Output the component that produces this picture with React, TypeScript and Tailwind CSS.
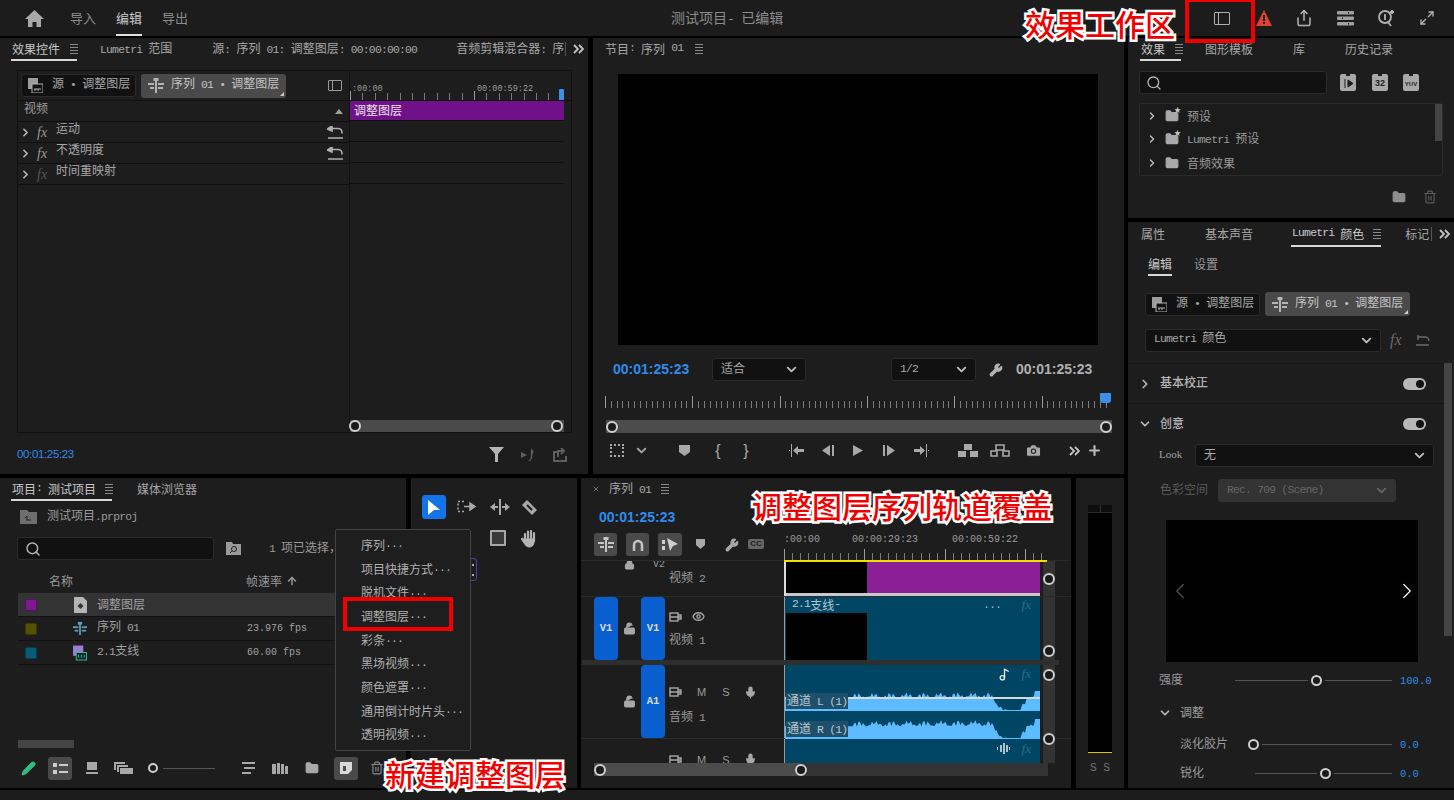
import type { ReactNode } from 'react';
import { ChevronDown, ChevronRight, ChevronLeft, Search, Wrench, ArrowUp, Plus, Trash2, Folder, Pencil, Camera, Mic, Eye, Lock, LockOpen, Music2, Maximize2, Share, X } from 'lucide-react';

// latin runs are squeezed to half the CJK width, as in the app's own font
function Z({ children }: { children: string }) {
  return (
    <>
      {children.split(/([\x00-\x7f•]+)/).filter(Boolean).map((part, i) =>
        /^[\x00-\x7f•]+$/.test(part) ? (
          <span key={i} className="font-['Liberation_Mono',monospace] text-[0.95em] tracking-[-0.07em] whitespace-pre">{part}</span>
        ) : (
          <span key={i}>{part}</span>
        )
      )}
    </>
  );
}

function Burger() {
  return (
    <span className="flex w-[8px] flex-col gap-[2px]">
      <span className="h-px bg-[#8a8a8a]" />
      <span className="h-px bg-[#8a8a8a]" />
      <span className="h-px bg-[#8a8a8a]" />
      <span className="h-px bg-[#8a8a8a]" />
    </span>
  );
}

function More() {
  return (
    <svg width="11" height="10" viewBox="0 0 11 10" fill="none" stroke="#c4c4c4" strokeWidth="1.8">
      <path d="M1 1l4 4-4 4M6 1l4 4-4 4" />
    </svg>
  );
}

function Knob({ size = 'w-[12px] h-[12px]' }: { size?: string }) {
  return <span className={`${size} block shrink-0 rounded-full border-2 border-[#cfcfcf] bg-[#1a1a1a]`} />;
}

function SeqIcon({ c = '#b4b4b4' }: { c?: string }) {
  return (
    <svg width="16" height="15" viewBox="0 0 16 15" fill={c}>
      <rect x="7" y="0" width="2" height="15" />
      <rect x="5.5" y="0" width="5" height="3" />
      <rect x="0" y="5" width="6" height="2" />
      <rect x="10" y="5" width="6" height="2" />
      <rect x="2" y="9" width="4" height="2" />
      <rect x="10" y="9" width="5" height="2" />
    </svg>
  );
}

function SourceIcon() {
  return (
    <svg width="15" height="15" viewBox="0 0 15 15">
      <rect x="0" y="0" width="10" height="11" fill="#9c9c9c" />
      <rect x="4" y="6" width="11" height="9" fill="#111" stroke="#b4b4b4" />
      <path d="M6 11h7M7 13v-2M10 13v-2" stroke="#b4b4b4" />
    </svg>
  );
}

function Tools({ d, w = 16, h = 14 }: { d: string; w?: number; h?: number }) {
  return (
    <svg width={w} height={h} viewBox={`0 0 ${w} ${h}`} fill="#a8a8a8">
      <path d={d} />
    </svg>
  );
}

function Slot({ children, className = '' }: { children: ReactNode; className?: string }) {
  return <span className={`flex w-[14px] shrink-0 items-center justify-center [&>svg]:shrink-0 ${className}`}>{children}</span>;
}

function SourceTabs() {
  return (
    <div className="flex items-center gap-[5px]">
      <div className="flex h-[23px] w-[115px] items-center rounded-[3px] border border-[#2a2a2a] bg-[#111] pl-[6px] text-[12px] text-[#a6a6a6]">
        <SourceIcon />
        <span className="ml-[9px] -mt-[2px]"><Z>源 • 调整图层</Z></span>
      </div>
      <div className="relative flex h-[24px] w-[145px] items-center rounded-[3px] bg-[#4a4a4a] pl-[7px] text-[12px] text-[#c4c4c4]">
        <SeqIcon />
        <span className="ml-[7px] -mt-[2px]"><Z>序列 01 • 调整图层</Z></span>
        <span className="absolute bottom-[2px] right-[2px] h-0 w-0 border-b-[4px] border-l-[4px] border-b-[#ccc] border-l-transparent" />
      </div>
    </div>
  );
}

function Dropdown({ w, label, dim }: { w: string; label: string; dim?: boolean }) {
  return (
    <div className={`${w} flex h-[23px] items-center justify-between rounded-[3px] border pl-[8px] pr-[6px] text-[12px] ${dim ? 'border-[#333] bg-[#333] text-[#666]' : 'border-[#2a2a2a] bg-[#111] text-[#a8a8a8]'}`}>
      <span className="-mt-[3px]"><Z>{label}</Z></span>
      <ChevronDown size={15} strokeWidth={3} color={dim ? '#666' : '#bdbdbd'} />
    </div>
  );
}

function Ruler({ w, step, major, h = 12 }: { w: number; step: number; major: number; h?: number }) {
  const n = Math.floor(w / step);
  return (
    <svg width={w} height={h} className="block">
      {Array.from({ length: n + 1 }, (_, i) => {
        const big = i % major === 0;
        return <rect key={i} x={Math.round(i * step)} y={big ? 0 : h - 7} width="1" height={big ? h : 7} fill={big ? '#9a9a9a' : '#7c7c7c'} />;
      })}
    </svg>
  );
}

function EffectRow({ name, dim, reset }: { name: string; dim?: boolean; reset?: boolean }) {
  return (
    <div className="flex h-[21px] items-center border-b border-[#0f0f0f] pl-[1px] text-[12px] text-[#a6a6a6]">
      <ChevronRight size={13} strokeWidth={3} color="#b8b8b8" />
      <span className={`ml-[5px] w-[16px] font-['Liberation_Serif',serif] text-[14px] italic ${dim ? 'text-[#565656]' : 'text-[#9a9a9a]'}`}>fx</span>
      <span className="-mt-[8px] ml-[3px]"><Z>{name}</Z></span>
      {reset && (
        <svg className="ml-auto mr-[5px]" width="17" height="13" viewBox="0 0 17 13" fill="none" stroke="#b0b0b0" strokeWidth="1.6">
          <path d="M4 2.500h7a4 4 0 0 1 4 4v1M4 0v5M1 12h15" />
          <path d="M0.500 3L5 0v5z" fill="#b0b0b0" />
        </svg>
      )}
    </div>
  );
}

function EffectControls() {
  return (
    <section className="flex h-full w-[588px] shrink-0 flex-col bg-[#1d1d1d]">
      <div className="flex h-[24px] shrink-0 items-center pb-[2px] pl-[12px] text-[12px] text-[#a6a6a6]">
        <span className="relative flex h-full items-center text-[#c8c8c8]">
          效果控件
          <span className="ml-[10px]"><Burger /></span>
          <span className="absolute -bottom-[1px] -left-[1px] h-[2px] w-[66px] bg-[#d8d8d8]" />
        </span>
        <span className="ml-[22px]"><Z>Lumetri 范围</Z></span>
        <span className="ml-[40px]"><Z>源: 序列 01: 调整图层: 00:00:00:00</Z></span>
        <span className="ml-[39px]"><Z>音频剪辑混合器: 序</Z></span>
        <span className="ml-px h-[14px] w-px bg-[#555]" />
        <span className="ml-[7px]"><More /></span>
      </div>
      <div className="ml-[17px] mt-[8px] flex h-[363px] w-[555px] border border-[#111]">
        <div className="flex w-[332px] shrink-0 flex-col border-r border-[#111]">
          <div className="flex h-[30px] items-center justify-between border-b border-[#111] pl-[3px] pr-[7px]">
            <SourceTabs />
            <span className="block h-[11px] w-[14px] rounded-[1px] border border-[#9a9a9a] pl-[3px]"><span className="block h-full w-px bg-[#9a9a9a]" /></span>
          </div>
          <div className="flex h-[21px] items-center justify-between border-b border-[#0f0f0f] pl-[6px] pr-[6px] text-[12px] text-[#9a9a9a]">
            <span className="-mt-[7px]">视频</span>
            <span className="h-0 w-0 border-x-[4px] border-b-[5px] border-x-transparent border-b-[#a0a0a0]" />
          </div>
          <EffectRow name="运动" reset />
          <EffectRow name="不透明度" reset />
          <EffectRow name="时间重映射" dim />
        </div>
        <div className="relative flex min-w-0 flex-1 flex-col">
          <div className="relative h-[30px] shrink-0 border-b border-[#111]">
            <span className="absolute left-[2px] top-[12px] font-['Liberation_Mono',monospace] text-[8.5px] text-[#9a9a9a]">:00:00</span>
            <span className="absolute left-[127px] top-[12px] font-['Liberation_Mono',monospace] text-[8.5px] text-[#9a9a9a]">00:00:59:22</span>
            <div className="absolute bottom-0 left-0"><Ruler w={213} step={12.4} major={10} h={9} /></div>
            <span className="absolute bottom-0 left-[209px] h-[11px] w-[5px] rounded-t-[1px] bg-[#3b8fe6]" />
          </div>
          <div className="flex h-[20px] w-[214px] items-center border-b border-[#0f0f0f] bg-[#711189] pl-[4px] text-[12px] text-[#e8e8e8]"><span className="-mt-[2px]">调整图层</span></div>
          <div className="h-[21px] w-[214px] border-b border-[#0f0f0f]" />
          <div className="h-[21px] w-[214px] border-b border-[#0f0f0f]" />
          <div className="h-[21px] w-[214px] border-b border-[#0f0f0f]" />
          <div className="mt-auto flex h-[12px] w-[214px] items-center justify-between bg-[#4a4a4a]">
            <span className="-ml-px"><Knob /></span>
            <span className="mr-px"><Knob /></span>
          </div>
        </div>
      </div>
      <div className="flex flex-1 items-center pl-[17px] pr-[21px] pt-[2px]">
        <span className="font-['Liberation_Sans',sans-serif] text-[11.5px] tracking-[-0.35px] text-[#2d8ceb]">00:01:25:23</span>
        <svg className="ml-auto" width="15" height="15" viewBox="0 0 15 15" fill="#b4b4b4"><path d="M0 0h15L9 7v8H6V7z" /></svg>
        <svg className="ml-[17px]" width="15" height="14" viewBox="0 0 15 14" fill="#5e5e5e"><path d="M0 4l6 3-6 3zM10 0c1 2 4 3 2 5-1 3 0 5-3 8-1 0-2 0-1-1 2 0 2-4 2-12z" /></svg>
        <svg className="ml-[17px]" width="14" height="14" viewBox="0 0 14 14" fill="none" stroke="#5e5e5e" strokeWidth="2"><path d="M5 4H1v9h12V8M5 9V3h5M8 0l3 3-3 3" /></svg>
      </div>
    </section>
  );
}

function Program() {
  return (
    <section className="flex h-full min-w-0 flex-1 flex-col bg-[#1d1d1d]">
      <div className="flex h-[24px] shrink-0 items-center pb-[2px] pl-[12px] text-[12px] text-[#a6a6a6]">
        <Z>节目: 序列 01</Z>
        <span className="ml-[12px]"><Burger /></span>
      </div>
      <div className="ml-[25px] mt-[12px] h-[271px] w-[480px] bg-black" />
      <div className="mt-[13px] flex h-[23px] items-center pl-[20px]">
        <span className="w-[99px] font-['Liberation_Sans',sans-serif] text-[14px] font-bold text-[#2d8ceb]">00:01:25:23</span>
        <Dropdown w="w-[94px]" label="适合" />
        <span className="w-[85px]" />
        <Dropdown w="w-[85px]" label="1/2" />
        <Wrench className="ml-[13px]" size={14} fill="#b4b4b4" color="#b4b4b4" />
        <span className="ml-[13px] font-['Liberation_Sans',sans-serif] text-[14px] font-bold text-[#b0b0b0]">00:01:25:23</span>
      </div>
      <div className="relative ml-[12px] mt-[13px] h-[14px]">
        <div className="pt-[2px]"><Ruler w={505} step={5.82} major={15} /></div>
        <span className="absolute -top-[1px] left-[495px] h-[10px] w-[11px] rounded-b-[3px] bg-[#3b8fe6]" />
      </div>
      <div className="ml-[13px] mt-[12px] flex h-[13px] w-[506px] items-center justify-between bg-[#4c4c4c]">
        <Knob />
        <Knob />
      </div>
      <div className="flex flex-1 items-center pb-[6px] pl-[17px] text-[#a8a8a8]">
        <Slot><span className="block h-[13px] w-[14px] shrink-0 border-2 border-dotted border-[#a8a8a8]" /></Slot>
        <Slot className="ml-[10px]"><ChevronDown size={15} strokeWidth={3} /></Slot>
        <Slot className="ml-[29px]"><Tools w={11} h={11} d="M0 0h11v7l-5.500 4L0 7z" /></Slot>
        <Slot className="ml-[20px] font-['Liberation_Sans',sans-serif] text-[16px]">{'{'}</Slot>
        <Slot className="ml-[14px] font-['Liberation_Sans',sans-serif] text-[16px]">{'}'}</Slot>
        <Slot className="ml-[36px]"><Tools w={15} h={13} d="M2 0h1v13H2zM0 6h1v1H0zM9 2v3h6v3H9v3L4 6.500z" /></Slot>
        <Slot className="ml-[18px]"><Tools w={12} h={11} d="M8 0v11L0 5.500zM10 0h2v11h-2z" /></Slot>
        <Slot className="ml-[16px]"><Tools w={10} h={11} d="M0 0l10 5.500L0 11z" /></Slot>
        <Slot className="ml-[17px]"><Tools w={12} h={11} d="M0 0h2v11H0zM4 0l8 5.500L4 11z" /></Slot>
        <Slot className="ml-[18px]"><Tools w={15} h={13} d="M12 0h1v13h-1zM14 6h1v1h-1zM6 2v3H0v3h6v3l5-4.500z" /></Slot>
        <Slot className="ml-[33px]"><Tools w={20} h={13} d="M6 0h8v6H6zM0 7h8v6H0zM12 7h8v6h-8z" /></Slot>
        <Slot className="ml-[18px]"><svg width="20" height="13" viewBox="0 0 20 13" fill="none" stroke="#a8a8a8" strokeWidth="1.600"><path d="M6 1h8v5H6zM1 7h6v5H1zM13 7h6v5h-6z" /></svg></Slot>
        <Slot className="ml-[19px]"><Camera size={17} fill="#a8a8a8" color="#1d1d1d" strokeWidth={1.5} /></Slot>
        <Slot className="ml-[27px]"><More /></Slot>
        <Slot className="ml-[6px]"><Plus size={15} strokeWidth={3.5} color="#b8b8b8" /></Slot>
      </div>
    </section>
  );
}

function Swatch({ c }: { c: string }) {
  return <span className={`h-[12px] w-[12px] rounded-[2px] border border-black/30 ${c}`} />;
}

function ProjectRow({ swatch, icon, name, fps, selected }: { swatch: string; icon: ReactNode; name: string; fps?: string; selected?: boolean }) {
  return (
    <div className={`flex h-[24px] items-center border-b border-[#111] pl-[7px] text-[12px] text-[#a0a0a0] ${selected ? 'bg-[#333]' : ''}`}>
      <Swatch c={swatch} />
      <span className="ml-[36px] flex w-[14px] justify-center">{icon}</span>
      <span className="-mt-[2px] ml-[10px] w-[150px]"><Z>{name}</Z></span>
      {fps && <span className="font-['Liberation_Mono',monospace] text-[10px]">{fps}</span>}
    </div>
  );
}

function Project() {
  return (
    <section className="flex h-full w-[406px] shrink-0 flex-col bg-[#1d1d1d]">
      <div className="flex h-[24px] items-center pb-[2px] pl-[12px] text-[12px] text-[#a6a6a6]">
        <span className="relative flex h-full items-center text-[#c8c8c8]">
          <Z>项目: 测试项目</Z>
          <span className="ml-[9px]"><Burger /></span>
          <span className="absolute -bottom-[1px] -left-[1px] h-[2px] w-[101px] bg-[#d8d8d8]" />
        </span>
        <span className="ml-[24px]">媒体浏览器</span>
      </div>
      <div className="mt-[3px] flex h-[24px] items-center pl-[20px] text-[12px] text-[#9a9a9a]">
        <svg width="17" height="14" viewBox="0 0 17 14" fill="#6e6e6e"><path d="M0 0h7l2 2h8v12H0z" /><path d="M6 10h5M7 10V6l-2 2" stroke="#222" fill="none" /></svg>
        <span className="ml-[10px] -mt-[2px]"><Z>测试项目.prproj</Z></span>
      </div>
      <div className="mt-[8px] flex items-center pl-[17px]">
        <div className="flex h-[23px] w-[197px] items-center rounded-[3px] border border-[#2a2a2a] bg-[#111] pl-[7px]">
          <Search size={16} color="#b4b4b4" strokeWidth={2.2} />
        </div>
        <svg className="ml-[12px]" width="15" height="13" viewBox="0 0 15 13" fill="#9a9a9a"><path d="M0 0h6l1 2h8v11H0z" /><circle cx="8" cy="7" r="2.500" fill="none" stroke="#222" /><path d="M6 9l-2 2" stroke="#222" /></svg>
        <span className="ml-[28px] text-[12px] text-[#9a9a9a]"><Z>1 项已选择，</Z></span>
      </div>
      <div className="mt-[9px] flex h-[24px] items-center text-[12px] text-[#9a9a9a]">
        <span className="ml-[49px] w-[197px]">名称</span>
        <span>帧速率</span>
        <ArrowUp className="ml-[4px]" size={12} strokeWidth={3} />
      </div>
      <div className="ml-[18px] flex flex-1 flex-col">
        <ProjectRow swatch="bg-[#7c1a8e]" selected name="调整图层" icon={<svg width="13" height="16" viewBox="0 0 13 16"><path d="M0 0h9l4 4v12H0z" fill="#b4b4b4" /><path d="M6.500 6l3 3-3 3-3-3z" fill="#333" /></svg>} />
        <ProjectRow swatch="bg-[#525200]" name="序列 01" fps="23.976 fps" icon={<SeqIcon c="#5f9fc0" />} />
        <ProjectRow swatch="bg-[#0b5a78]" name="2.1支线" fps="60.00 fps" icon={<svg width="15" height="16" viewBox="0 0 15 16"><rect width="11" height="11" fill="#9a7fd0" /><rect x="3.500" y="7.500" width="11" height="8" fill="#123" stroke="#2fc48a" /><path d="M6 10v3M9 10v3M12 10v3" stroke="#2fc48a" /></svg>} />
        <div className="mt-auto h-[8px] w-[56px] bg-[#444]" />
      </div>
      <div className="flex h-[40px] shrink-0 items-center pl-[21px] text-[#a0a0a0]">
        <Slot><Pencil size={15} fill="#2fbf7f" color="#2fbf7f" /></Slot>
        <span className="ml-[13px] flex h-[23px] w-[24px] flex-col items-center justify-center gap-[3px] rounded-[3px] bg-[#4a4a4a]">
          <span className="flex gap-[2px]"><span className="h-[4px] w-[4px] bg-[#ccc]" /><span className="mt-[1px] h-[2px] w-[9px] bg-[#ccc]" /></span>
          <span className="flex gap-[2px]"><span className="h-[4px] w-[4px] bg-[#ccc]" /><span className="mt-[1px] h-[2px] w-[9px] bg-[#ccc]" /></span>
        </span>
        <Slot className="ml-[13px]"><Tools w={12} h={12} d="M1 0h10v8H1zM0 10h12v2H0z" /></Slot>
        <Slot className="ml-[17px]"><Tools w={19} h={12} d="M0 0h11v2H2v6H0zM3 3h11v2H5v5H3zM6 6h13v6H6z" /></Slot>
        <span className="ml-[18px]"><Knob size="h-[10px] w-[10px]" /></span>
        <span className="ml-[5px] h-px w-[52px] bg-[#555]" />
        <Slot className="ml-[26px]"><Tools w={13} h={12} d="M0 0h13v2H0zM2 5h11v2H2zM0 10h9v2H0z" /></Slot>
        <Slot className="ml-[18px]"><Tools w={16} h={11} d="M0 1h4v10H0zM5 0h3v11H5zM9 1h3v10H9zM13 3h3v8h-3z" /></Slot>
        <Slot className="ml-[18px]"><Folder size={14} fill="#a8a8a8" color="#a8a8a8" /></Slot>
        <span className="ml-[15px] flex h-[23px] w-[24px] items-center justify-center rounded-[3px] bg-[#4a4a4a]">
          <svg width="12" height="12" viewBox="0 0 12 12"><path d="M0 0h12v8l-4 4H0z" fill="#d8d8d8" /><path d="M3 4h3v5H3z" fill="#4a4a4a" /></svg>
        </span>
        <Slot className="ml-[12px]"><Trash2 size={14} color="#8a8a8a" /></Slot>
      </div>
    </section>
  );
}

function ToolsPanel() {
  return (
    <section className="h-full w-[166px] shrink-0 bg-[#1d1d1d] pl-[11px] pt-[17px]">
      <div className="flex h-[24px] items-center">
        <span className="flex h-[24px] w-[24px] items-center justify-center rounded-[3px] bg-[#1473e6]">
          <svg width="12" height="15" viewBox="0 0 12 15" fill="#fff"><path d="M0 0l12 10H6l-6 5z" /></svg>
        </span>
        <span className="ml-[11px]">
          <svg width="20" height="14" viewBox="0 0 20 14" fill="none" stroke="#a8a8a8" strokeWidth="1.500"><path d="M7 1.500H1v10h7" strokeDasharray="2 2" /><path d="M7 6.500h8" /><path d="M13 3l5 3.500-5 3.500z" fill="#a8a8a8" /></svg>
        </span>
        <span className="ml-[13px]">
          <svg width="20" height="16" viewBox="0 0 20 16" fill="#a8a8a8"><path d="M9 0h2v16H9zM0 8l5-4v8zM20 8l-5-4v8z" /><path d="M5 7h3v2H5zM12 7h3v2h-3z" /></svg>
        </span>
        <span className="ml-[12px]">
          <svg width="15" height="15" viewBox="0 0 15 15" fill="#a8a8a8"><path d="M5 0l10 10-5 5L0 5z" /><path d="M5 5l5 5" stroke="#1d1d1d" strokeWidth="2" /></svg>
        </span>
      </div>
      <div className="mt-[7px] flex h-[24px] items-center pl-[68px]">
        <span className="block h-[16px] w-[16px] rounded-[1px] border-2 border-[#a8a8a8] bg-[#3a3a3a]" />
        <svg className="ml-[14px]" width="19" height="19" viewBox="0 0 19 19" fill="none" stroke="#b4b4b4" strokeLinecap="round">
          <path d="M5 5v7M8 2.500v9M11 2v9M14 4v8" strokeWidth="2.200" />
          <path d="M5 10h9v3c0 3-2 5-4.500 5S6 17 4 14l-2.500-3.500c-.5-1 .7-2 1.700-1L5 12" fill="#b4b4b4" strokeWidth="1" />
        </svg>
      </div>
      <div className="ml-[42px] mt-[8px] flex h-[23px] w-[13px] flex-col items-end justify-center gap-[8px] rounded-r-[3px] border border-[#4a3fb0] pr-[2px]">
        <span className="h-[2px] w-[2px] bg-[#aaa]" />
        <span className="h-[2px] w-[2px] bg-[#aaa]" />
      </div>
    </section>
  );
}

function Wave({ seed, w = 256, h = 20 }: { seed: number; w?: number; h?: number }) {
  let d = `M0 ${h} `;
  for (let x = 0; x <= w; x += 1.5) {
    const noise = Math.abs(Math.sin(x * 0.73 + seed) * Math.cos(x * 0.19 + seed * 2)) * 6 + Math.abs(Math.sin(x * 2.1)) * 1.5;
    const drop = x > 205 && x < 245 ? Math.min(x - 205, 16, (245 - x) * 1.4) : 0;
    const bump = x > 250 ? 6 : 0;
    d += `L${x} ${Math.min(h - 1, h * 0.42 - noise + drop * (h * 0.055) - bump)} `;
  }
  d += `L${w} ${h} Z`;
  return (
    <svg width={w} height={h} className="block">
      <path d={d} fill="#5cbcff" />
    </svg>
  );
}

function TrackBtn({ label, h }: { label: string; h: string }) {
  return <span className={`${h} flex w-[24px] items-center justify-center rounded-[4px] bg-[#0a5fd0] font-['Liberation_Mono',monospace] text-[10.5px] font-bold text-[#d8d8d8]`}>{label}</span>;
}

function ClipIcon() {
  return (
    <svg width="13" height="10" viewBox="0 0 13 10" fill="none" stroke="#a8a8a8" strokeWidth="1.400"><rect x="1" y="1" width="8" height="8" /><path d="M1 5h11M9 3h3v4H9" /></svg>
  );
}

function Fx({ className = '' }: { className?: string }) {
  return <span className={`font-['Liberation_Serif',serif] text-[13px] italic text-[#2f6b85] ${className}`}>fx</span>;
}

function AudioIcons() {
  return (
    <span className="flex items-center font-['Liberation_Sans',sans-serif] text-[11px]">
      <ClipIcon />
      <span className="ml-[15px]">M</span>
      <span className="ml-[16px]">S</span>
      <Mic className="ml-[14px]" size={13} fill="#a8a8a8" color="#a8a8a8" />
    </span>
  );
}

function Timeline() {
  return (
    <section className="flex h-full w-[490px] shrink-0 flex-col bg-[#1d1d1d]">
      <div className="flex h-[24px] shrink-0 items-center pb-[2px] pl-[11px] text-[12px] text-[#a6a6a6]">
        <X size={8} strokeWidth={2} color="#9a9a9a" />
        <span className="ml-[9px]"><Z>序列 01</Z></span>
        <span className="ml-[10px]"><Burger /></span>
      </div>
      <div className="flex h-[25px] shrink-0 items-center pl-[18px] pt-[6px] font-['Liberation_Sans',sans-serif] text-[14px] font-bold text-[#2d8ceb]">00:01:25:23</div>
      <div className="flex h-[33px] shrink-0 pt-[6px]">
        <div className="flex w-[203px] shrink-0 items-start pl-[13px]">
          <span className="flex h-[23px] w-[23px] items-center justify-center rounded-[3px] bg-[#4a4a4a]"><SeqIcon c="#c4c4c4" /></span>
          <span className="ml-[9px] flex h-[23px] w-[23px] items-center justify-center rounded-[3px] bg-[#4a4a4a]">
            <svg width="12" height="12" viewBox="0 0 12 12" fill="none" stroke="#c4c4c4" strokeWidth="2.500"><path d="M2 12V6a4 4 0 0 1 8 0v6" /></svg>
          </span>
          <span className="ml-[9px] flex h-[23px] w-[24px] items-center justify-center rounded-[3px] bg-[#4a4a4a]">
            <svg width="16" height="14" viewBox="0 0 16 14" fill="#d0d0d0"><path d="M5 0l11 6-5 2-3 5zM0 2h3v4H0zM0 8h3v4H0z" /></svg>
          </span>
          <span className="ml-[14px] mt-[6px]"><Tools w={9} h={10} d="M0 0h9v6l-4.500 4L0 6z" /></span>
          <Wrench className="ml-[20px] mt-[5px]" size={14} fill="#a8a8a8" color="#a8a8a8" />
          <span className="ml-[9px] mt-[6px] flex h-[10px] w-[16px] items-center justify-center rounded-[2px] bg-[#666] font-['Liberation_Sans',sans-serif] text-[8px] font-bold leading-none text-[#1d1d1d]">CC</span>
        </div>
        <div className="relative flex-1">
          <span className="absolute -top-[1px] left-0 font-['Liberation_Mono',monospace] text-[10px] text-[#9a9a9a]">:00:00</span>
          <span className="absolute -top-[1px] left-[68px] font-['Liberation_Mono',monospace] text-[10px] text-[#9a9a9a]">00:00:29:23</span>
          <span className="absolute -top-[1px] left-[168px] font-['Liberation_Mono',monospace] text-[10px] text-[#9a9a9a]">00:00:59:22</span>
        </div>
      </div>
      <div className="relative flex h-[37px] shrink-0 border-y border-[#2a2a2a]">
        <div className="flex w-[203px] shrink-0 overflow-hidden text-[12px] text-[#9a9a9a]">
          <Lock className="ml-[43px] -mt-[2px]" size={11} fill="#a8a8a8" color="#a8a8a8" />
          <span className="ml-[18px] -mt-[2px] font-['Liberation_Mono',monospace] text-[10px] leading-[11px]">V2</span>
          <span className="ml-[4px] mt-[7px]"><Z>视频 2</Z></span>
        </div>
        <div className="flex w-[256px] flex-col border-l-2 border-[#ddd]">
          <div className="flex flex-1">
            <span className="w-[81px] bg-black" />
            <span className="flex-1 bg-[#8a1f96]" />
          </div>
          <span className="h-[3px] bg-[#c8c8c8]" />
        </div>
        <div className="absolute -top-[12px] left-[203px]"><Ruler w={263} step={8.03} major={10} h={11} /></div>
        <span className="absolute -top-[1px] left-[203px] h-[2px] w-[263px] bg-[#f0e000]" />
        <div className="ml-[3px] flex w-[12px] justify-center bg-[#333] pt-[12px]"><Knob /></div>
      </div>
      <div className="flex h-[63px] shrink-0">
        <div className="flex w-[203px] shrink-0 pl-[13px] text-[12px] text-[#9a9a9a]">
          <TrackBtn label="V1" h="h-full" />
          <span className="flex w-[23px] items-center justify-center"><LockOpen size={13} fill="#a8a8a8" color="#a8a8a8" /></span>
          <TrackBtn label="V1" h="h-full" />
          <div className="ml-[4px] flex flex-col pt-[13px]">
            <span className="flex items-center gap-[10px]"><ClipIcon /><Eye size={13} color="#a8a8a8" strokeWidth={2.5} /></span>
            <span className="mt-[7px]"><Z>视频 1</Z></span>
          </div>
        </div>
        <div className="relative flex w-[256px] flex-col border-l border-[#999] bg-[#004664]">
          <div className="flex h-[16px] items-center pl-[7px] pr-[9px] text-[12px] text-[#b8c8d0]">
            <Z>2.1支线-</Z>
            <span className="ml-auto font-['Liberation_Mono',monospace] text-[10px] text-[#b8c8d0]">...</span>
            <Fx className="ml-[20px]" />
          </div>
          <span className="ml-px h-[47px] w-[81px] bg-black" />
        </div>
        <div className="ml-[3px] flex w-[12px] items-end justify-center bg-[#333] pb-[3px]"><Knob /></div>
      </div>
      <div className="ml-px h-[5px] w-[477px] shrink-0 bg-[#2e2e2e]" />
      <div className="flex h-[74px] shrink-0 border-b border-[#2a2a2a]">
        <div className="flex w-[203px] shrink-0 pl-[13px] text-[12px] text-[#9a9a9a]">
          <span className="w-[24px]" />
          <span className="flex w-[23px] items-center justify-center"><LockOpen size={13} fill="#a8a8a8" color="#a8a8a8" /></span>
          <TrackBtn label="A1" h="h-full" />
          <div className="ml-[4px] flex flex-col pt-[19px]">
            <AudioIcons />
            <span className="mt-[6px]"><Z>音频 1</Z></span>
          </div>
        </div>
        <div className="relative flex w-[256px] flex-col border-l border-[#999] bg-[#004664]">
          <div className="flex h-[18px] items-center justify-end pr-[9px]">
            <Music2 size={13} color="#e8e8e8" strokeWidth={2.5} />
            <Fx className="ml-[11px]" />
          </div>
          <div className="relative mt-[8px] h-[20px]">
            <Wave seed={1} w={255} />
            <span className="absolute left-0 top-[6px] h-[2px] w-[255px] bg-[#d8d8d8]" />
            <span className="absolute left-[1px] top-[2px] bg-[#1f4f6b] px-px text-[12px] leading-[13px] text-[#b8c8d0]"><Z>通道 L (1)</Z></span>
          </div>
          <div className="relative mt-[8px] h-[20px]">
            <Wave seed={4} w={255} />
            <span className="absolute left-[1px] top-[2px] bg-[#1f4f6b] px-px text-[12px] leading-[14px] text-[#b8c8d0]"><Z>通道 R (1)</Z></span>
          </div>
        </div>
        <div className="ml-[3px] flex w-[12px] flex-col items-center justify-between bg-[#333] pt-[4px]">
          <Knob />
          <span className="relative z-10 -mb-[7px]"><Knob /></span>
        </div>
      </div>
      <div className="flex h-[24px] shrink-0">
        <div className="flex w-[203px] shrink-0 items-end overflow-hidden pl-[88px] text-[#9a9a9a]">
          <span className="-mb-[5px]"><AudioIcons /></span>
        </div>
        <div className="flex w-[256px] items-start justify-end border-l border-[#999] bg-[#004664] pr-[9px]">
          <svg className="mt-[4px]" width="14" height="11" viewBox="0 0 14 11" fill="#a8c4d0"><path d="M0 4h1v3H0zM3 2h2v7H3zM6 0h2v11H6zM9 2h2v7H9zM12 4h1v3h-1z" /></svg>
          <Fx className="ml-[11px]" />
        </div>
        <div className="ml-[3px] w-[12px] bg-[#333]" />
      </div>
      <div className="ml-[13px] flex h-[13px] w-[454px] shrink-0 items-center bg-[#333]">
        <div className="flex h-full w-[207px] items-center justify-between bg-[#4c4c4c]"><Knob /><span className="-mr-[6px]"><Knob /></span></div>
      </div>
    </section>
  );
}

function Meter() {
  return (
    <section className="flex h-full min-w-0 flex-1 flex-col items-center bg-[#1d1d1d] pt-[27px]">
      <div className="flex h-[248px] w-[24px] flex-col border-b border-[#d8c800] bg-black">
        <div className="flex h-[8px] gap-px border-b border-[#2a2a2a] bg-[#0e0e0e]"><span className="flex-1" /><span className="w-px bg-[#333]" /><span className="flex-1" /></div>
      </div>
      <div className="mt-[7px] flex w-[24px] justify-between px-[2px] font-['Liberation_Sans',sans-serif] text-[10px] text-[#777]"><span>S</span><span>S</span></div>
    </section>
  );
}

// the three little film-strip badges beside the effects search
function Badge({ children }: { children: ReactNode }) {
  return (
    <span className="relative flex h-[17px] w-[16px] items-center justify-center rounded-[2px] bg-[#a8a8a8] pt-[2px] font-['Liberation_Sans',sans-serif] font-bold text-[#1d1d1d]">
      <span className="absolute left-[6px] top-0 h-[2px] w-[4px] bg-[#1d1d1d]" />
      {children}
    </span>
  );
}

function Effects() {
  const items: [string, boolean][] = [['预设', true], ['Lumetri 预设', true], ['音频效果', false]];
  return (
    <section className="flex h-[180px] shrink-0 flex-col bg-[#1d1d1d]">
      <div className="flex h-[24px] shrink-0 items-center pb-[2px] pl-[13px] text-[12px] text-[#a6a6a6]">
        <span className="relative flex h-full items-center text-[#c8c8c8]">
          效果
          <span className="ml-[10px]"><Burger /></span>
          <span className="absolute -bottom-[1px] -left-[1px] h-[2px] w-[41px] bg-[#d8d8d8]" />
        </span>
        <span className="ml-[22px]">图形模板</span>
        <span className="ml-[40px]">库</span>
        <span className="ml-[40px]">历史记录</span>
      </div>
      <div className="mt-[9px] flex items-center pl-[11px]">
        <div className="flex h-[23px] w-[188px] items-center rounded-[3px] border border-[#2a2a2a] bg-[#111] pl-[6px]"><Search size={16} color="#b4b4b4" strokeWidth={2} /></div>
        <span className="ml-[13px]"><Badge><svg width="10" height="9" viewBox="0 0 10 9" fill="#1d1d1d"><path d="M2 0v9M5 1l5 3.500L5 8z" stroke="#1d1d1d" /></svg></Badge></span>
        <span className="ml-[16px]"><Badge><span className="text-[9px] leading-none">32</span></Badge></span>
        <span className="ml-[15px]"><Badge><span className="text-[6px] leading-none">YUV</span></Badge></span>
      </div>
      <div className="relative ml-[11px] mt-[9px] flex h-[73px] w-[304px] flex-col rounded-[3px] border border-[#2a2a2a] bg-[#1b1b1b] pl-[6px] text-[12px] text-[#9a9a9a]">
        {items.map(([label, star]) => (
          <div key={label} className="flex h-[23.6px] items-center">
            <ChevronRight size={12} strokeWidth={3} color="#b8b8b8" />
            <span className="relative ml-[7px]">
              <Folder size={14} fill="#a8a8a8" color="#a8a8a8" />
              {star && <span className="absolute -right-[2px] -top-[3px] text-[7px] leading-none text-[#c8c8c8]">★</span>}
            </span>
            <span className="ml-[8px]"><Z>{label}</Z></span>
          </div>
        ))}
        <span className="absolute right-0 top-0 h-[37px] w-[7px] bg-[#444]" />
      </div>
      <div className="flex flex-1 items-center justify-end gap-[17px] pr-[17px]">
        <Folder size={14} fill="#8e8e8e" color="#8e8e8e" />
        <Trash2 size={14} color="#5c5c5c" />
      </div>
    </section>
  );
}

function Toggle() {
  return (
    <span className="ml-auto flex h-[12px] w-[23px] items-center justify-end rounded-full bg-[#b8b8b8] pr-[2px]">
      <span className="h-[8px] w-[8px] rounded-full bg-[#111]" />
    </span>
  );
}

function SliderRow({ label, left, width, pos, value, indent }: { label: string; left: string; width: string; pos: string; value: string; indent: string }) {
  return (
    <div className={`flex h-[24px] items-center text-[12px] text-[#9a9a9a] ${indent}`}>
      <span className="-mt-[3px] shrink-0">{label}</span>
      <div className={`relative h-px ${left} ${width} shrink-0 bg-[#555]`}>
        <span className={`absolute -top-[5px] ${pos} rounded-full bg-[#1d1d1d] px-[3px]`}><Knob size="h-[11px] w-[11px]" /></span>
      </div>
      <span className="ml-[8px] mt-[3px] font-['Liberation_Mono',monospace] text-[10.5px] text-[#2d8ceb]">{value}</span>
    </div>
  );
}

function Lumetri() {
  return (
    <section className="relative flex min-h-0 flex-1 flex-col bg-[#1d1d1d]">
      <div className="flex h-[24px] shrink-0 items-center pl-[13px] text-[12px] text-[#a6a6a6]">
        <span>属性</span>
        <span className="ml-[40px]">基本声音</span>
        <span className="relative ml-[39px] flex h-full items-center text-[#c8c8c8]">
          <Z>Lumetri 颜色</Z>
          <span className="ml-[9px]"><Burger /></span>
          <span className="absolute -bottom-[1px] -left-[1px] h-[2px] w-[90px] bg-[#d8d8d8]" />
        </span>
        <span className="ml-[24px]">标记</span>
        <span className="ml-[2px] h-[14px] w-px bg-[#555]" />
        <span className="ml-[7px]"><More /></span>
      </div>
      <div className="mt-[7px] flex h-[22px] items-center pl-[20px] text-[12px] text-[#9a9a9a]">
        <span className="relative text-[#c8c8c8]">编辑<span className="absolute -bottom-[3px] left-0 h-[2px] w-[24px] bg-[#d8d8d8]" /></span>
        <span className="ml-[22px]">设置</span>
      </div>
      <div className="ml-[17px] mt-[17px]"><SourceTabs /></div>
      <div className="ml-[17px] mt-[12px] flex items-center">
        <Dropdown w="w-[236px]" label="Lumetri 颜色" />
        <span className="ml-[9px] font-['Liberation_Serif',serif] text-[16px] italic text-[#6a6a6a]">fx</span>
        <svg className="ml-[13px]" width="15" height="11" viewBox="0 0 15 11" fill="none" stroke="#6a6a6a" strokeWidth="1.500"><path d="M3 2h7a4 4 0 0 1 4 4M3 0v5M1 10h13" /></svg>
      </div>
      <div className="mt-[11px] flex h-[41px] w-[316px] items-center border-y border-[#141414] pl-[10px] pr-[18px] text-[12px] font-medium text-[#b4b4b4]">
        <ChevronRight size={14} strokeWidth={3} color="#b8b8b8" />
        <span className="ml-[8px] -mt-[4px]">基本校正</span>
        <Toggle />
      </div>
      <div className="flex h-[40px] w-[316px] items-center pl-[10px] pr-[18px] text-[12px] font-medium text-[#b4b4b4]">
        <ChevronDown size={14} strokeWidth={3} color="#b8b8b8" />
        <span className="ml-[8px] -mt-[2px]">创意</span>
        <Toggle />
      </div>
      <div className="flex items-center pl-[31px] text-[12px] text-[#a0a0a0]">
        <span className="-mt-[3px] w-[36px] font-['Liberation_Serif',serif] text-[11px]">Look</span>
        <Dropdown w="w-[239px]" label="无" />
      </div>
      <div className="mt-[12px] flex items-center pl-[32px] text-[12px] text-[#5c5c5c]">
        <span className="-mt-[4px] w-[58px]">色彩空间</span>
        <Dropdown w="w-[178px]" label="Rec. 709 (Scene)" dim />
      </div>
      <div className="ml-[38px] mt-[18px] flex h-[142px] w-[252px] items-center justify-between bg-black">
        <ChevronLeft className="ml-[1px]" size={26} strokeWidth={1} color="#555" />
        <ChevronRight className="-mr-[2px]" size={26} strokeWidth={1.2} color="#f0f0f0" />
      </div>
      <div className="mt-[6px]"><SliderRow label="强度" left="ml-[52px]" width="w-[157px]" pos="left-[73px]" value="100.0" indent="pl-[31px]" /></div>
      <div className="mt-[9px] flex h-[24px] items-center pl-[30px] text-[12px] text-[#a0a0a0]">
        <ChevronDown size={14} strokeWidth={3} color="#b8b8b8" />
        <span className="ml-[8px] -mt-[2px]">调整</span>
      </div>
      <div className="mt-[7px]"><SliderRow label="淡化胶片" left="ml-[25px]" width="w-[139px]" pos="-left-[8px]" value="0.0" indent="pl-[52px]" /></div>
      <div className="mt-[5px]"><SliderRow label="锐化" left="ml-[51px]" width="w-[137px]" pos="left-[62px]" value="0.0" indent="pl-[52px]" /></div>
      <span className="absolute right-[2px] top-[141px] h-[273px] w-[8px] bg-[#444]" />
    </section>
  );
}

const menuItems = ['序列...', '项目快捷方式...', '脱机文件...', '调整图层...', '彩条...', '黑场视频...', '颜色遮罩...', '通用倒计时片头...', '透明视频...'];

const noteClass = "absolute font-['Noto_Sans_CJK_SC',sans-serif] text-[30px] font-medium leading-none whitespace-nowrap text-[#f00000] [-webkit-text-stroke:5px_white] [paint-order:stroke_fill]";

export default function App() {
  return (
    <div className="relative flex h-[800px] w-[1454px] flex-col overflow-hidden whitespace-nowrap bg-black font-['Noto_Sans_CJK_SC',sans-serif] text-[12px]">
      <header className="flex h-[36px] shrink-0 items-center bg-[#1c1c1c] text-[13px] text-[#8c8c8c]">
        <svg className="ml-[25px]" width="19" height="17" viewBox="0 0 19 17" fill="#a8a8a8"><path d="M9.500 0L19 9h-3v8h-4.500v-5h-4v5H3V9H0z" /></svg>
        <span className="ml-[26px]">导入</span>
        <span className="relative ml-[20px] flex h-full items-center text-[#c8c8c8]">编辑<span className="absolute bottom-0 left-0 h-[2px] w-full bg-[#e0e0e0]" /></span>
        <span className="ml-[20px]">导出</span>
        <span className="ml-[483px] w-[130px] text-[14px]"><Z>测试项目- 已编辑</Z></span>
        <span className="ml-[413px] block h-[13px] w-[16px] rounded-[1px] border border-[#b0b0b0] pl-[3px]"><span className="block h-full w-px bg-[#b0b0b0]" /></span>
        <svg className="ml-[26px]" width="16" height="16" viewBox="0 0 16 16"><path d="M8 0l8 16H0z" fill="#e0402e" /><path d="M7 5h2v6H7zM7 12h2v2H7z" fill="#1c1c1c" /></svg>
        <Share className="ml-[23px]" size={18} color="#b4b4b4" strokeWidth={2} />
        <svg className="ml-[24px]" width="17" height="15" viewBox="0 0 17 15" fill="#a0a0a0"><rect width="17" height="3.500" rx="1" /><rect y="5.500" width="17" height="3.500" rx="1" /><rect y="11" width="17" height="3.500" rx="1" /><path d="M11 1h1v1.500h-1zM5 6.500h1V8H5zM11 12h1v1.500h-1z" fill="#1c1c1c" /></svg>
        <svg className="ml-[24px]" width="17" height="18" viewBox="0 0 17 18" fill="none" stroke="#b0b0b0" strokeWidth="1.800"><circle cx="7" cy="8" r="6" /><path d="M10 13l3 4M7 5v6M14 1v4M12 3h4" /></svg>
        <Maximize2 className="ml-[24px]" size={16} color="#b4b4b4" strokeWidth={2} />
      </header>
      <main className="mt-[2px] flex h-[750px] shrink-0 gap-[4px]">
        <div className="flex w-[1124px] shrink-0 flex-col gap-[4px]">
          <div className="flex h-[436px] shrink-0 gap-[5px]">
            <EffectControls />
            <Program />
          </div>
          <div className="flex min-h-0 flex-1 gap-[5px]">
            <Project />
            <ToolsPanel />
            <span className="-ml-[1px] flex h-full"><Timeline /></span>
            <Meter />
          </div>
        </div>
        <div className="flex min-w-0 flex-1 flex-col gap-[4px]">
          <Effects />
          <Lumetri />
        </div>
      </main>
      <div className="mt-[2px] flex-1 bg-[#1c1c1c]" />

      <div className="absolute left-[335px] top-[529px] flex h-[222px] w-[136px] flex-col rounded-[2px] border border-[#444] bg-[#1e1e1e] py-[3px] pl-[25px] text-[12px] text-[#b0b0b0]">
        {menuItems.map((m) => (
          <div key={m} className="flex h-[23.7px] shrink-0 items-center whitespace-nowrap"><Z>{m}</Z></div>
        ))}
      </div>
      <span className="absolute left-[343px] top-[597px] h-[34px] w-[110px] border-[4px] border-[#f00000]" />
      <span className="absolute left-[1185px] -top-[2px] h-[45px] w-[70px] border-[4px] border-[#f00000]" />
      <span className={`${noteClass} left-[1025px] top-[8px]`}>效果工作区</span>
      <span className={`${noteClass} left-[752px] top-[490px]`}>调整图层序列轨道覆盖</span>
      <span className={`${noteClass} left-[385px] top-[758px]`}>新建调整图层</span>
    </div>
  );
}
